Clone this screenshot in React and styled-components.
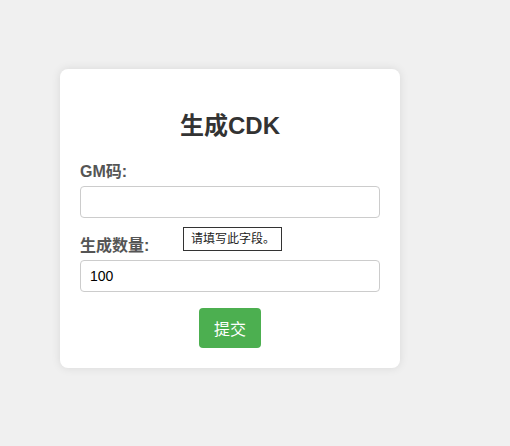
import React from "react";
import styled, { createGlobalStyle } from "styled-components";

const GlobalStyle = createGlobalStyle`
  html, body {
    margin: 0;
    padding: 0;
    background: #f0f0f0;
    font-family: "Liberation Sans", Arial, "Noto Sans CJK SC", sans-serif;
  }
`;

const Page = styled.div`
  padding: 69px 0 0 60px;
  min-height: 446px;
  box-sizing: border-box;
`;

const Card = styled.div`
  position: relative;
  width: 340px;
  box-sizing: border-box;
  padding: 20px;
  background: #ffffff;
  border-radius: 8px;
  box-shadow: 0 0 10px rgba(0, 0, 0, 0.1);
`;

const Title = styled.h2`
  margin: 23px 0 22px;
  font-size: 24px;
  line-height: 28px;
  font-weight: bold;
  text-align: center;
  color: #333333;
`;

const Label = styled.label`
  display: block;
  margin-bottom: 5px;
  font-size: 16px;
  line-height: 19px;
  font-weight: bold;
  color: #555555;
`;

const Field = styled.div`
  margin-bottom: ${(p) => (p.$last ? "16px" : "18px")};
`;

const Input = styled.input`
  display: block;
  width: 100%;
  height: 32px;
  box-sizing: border-box;
  padding: 8px 9px;
  border: 1px solid #cccccc;
  border-radius: 4px;
  font-family: "Liberation Sans", Arial, sans-serif;
  font-size: 14px;
  color: #000000;
  outline: none;
`;

const Actions = styled.div`
  display: flex;
  justify-content: center;
`;

const Button = styled.button`
  height: 40px;
  padding: 0 15px;
  border: none;
  border-radius: 4px;
  background: #4caf50;
  color: #ffffff;
  font-family: "Liberation Sans", Arial, "Noto Sans CJK SC", sans-serif;
  font-size: 16px;
  cursor: pointer;
`;

const Tooltip = styled.div`
  position: absolute;
  left: 123px;
  top: 158px;
  width: 99px;
  height: 24px;
  box-sizing: border-box;
  padding: 0 0 0 7px;
  border: 1px solid #333333;
  background: #ffffff;
  color: #222222;
  font-size: 12px;
  line-height: 22px;
  white-space: nowrap;
`;

export default function App() {
  return (
    <>
      <GlobalStyle />
      <Page>
        <Card>
          <Title>生成CDK</Title>
          <Field>
            <Label>GM码:</Label>
            <Input type="text" />
          </Field>
          <Field $last>
            <Label>生成数量:</Label>
            <Input type="text" defaultValue="100" />
          </Field>
          <Actions>
            <Button>提交</Button>
          </Actions>
          <Tooltip>请填写此字段。</Tooltip>
        </Card>
      </Page>
    </>
  );
}
